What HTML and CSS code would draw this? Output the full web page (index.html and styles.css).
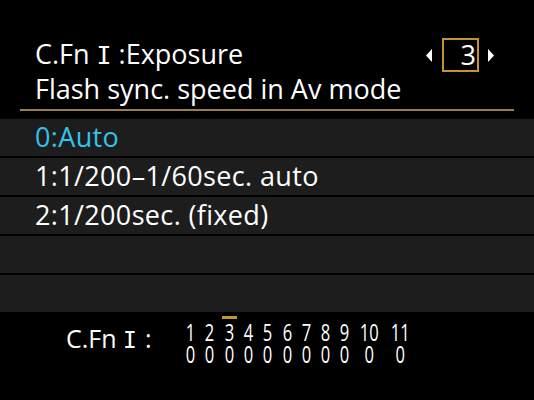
FILE: index.html
```html
<!DOCTYPE html>
<html lang="en">
<head>
<meta charset="utf-8">
<title>C.Fn I: Exposure</title>
<link rel="stylesheet" href="styles.css">
</head>
<body>
<div class="screen">
  <header class="header">
    <div class="title-row">
      <div class="title">C.Fn <span class="rn">I</span> :Exposure</div>
      <div class="selector">
        <svg class="tri" width="6" height="13" viewBox="0 0 6 13"><polygon points="6,0 6,13 0,6.5" fill="#fff"/></svg>
        <div class="numbox">3</div>
        <svg class="tri" width="6" height="13" viewBox="0 0 6 13"><polygon points="0,0 0,13 6,6.5" fill="#fff"/></svg>
      </div>
    </div>
    <div class="subtitle">Flash sync. speed in Av mode</div>
  </header>
  <div class="rule"></div>
  <ul class="options">
    <li class="option selected">0:Auto</li>
    <li class="option">1:1/200–1/60sec. auto</li>
    <li class="option">2:1/200sec. (fixed)</li>
    <li class="option"></li>
    <li class="option"></li>
  </ul>
  <footer class="footer">
    <div class="label">C.Fn <span class="rn">I</span><span class="colon">:</span></div>
    <div class="grid">
      <div class="col"><span class="mark"></span><span class="d">1<br>0</span></div>
      <div class="col"><span class="mark"></span><span class="d">2<br>0</span></div>
      <div class="col"><span class="mark on"></span><span class="d">3<br>0</span></div>
      <div class="col"><span class="mark"></span><span class="d">4<br>0</span></div>
      <div class="col"><span class="mark"></span><span class="d">5<br>0</span></div>
      <div class="col"><span class="mark"></span><span class="d">6<br>0</span></div>
      <div class="col"><span class="mark"></span><span class="d">7<br>0</span></div>
      <div class="col"><span class="mark"></span><span class="d">8<br>0</span></div>
      <div class="col"><span class="mark"></span><span class="d">9<br>0</span></div>
      <div class="col"><span class="mark"></span><span class="d">10<br>0</span></div>
      <div class="col"><span class="mark"></span><span class="d">11<br>0</span></div>
    </div>
  </footer>
</div>
</body>
</html>
```

FILE: styles.css
```css
* { box-sizing: border-box; }
html, body {
  margin: 0;
  padding: 0;
  background: #000;
}
.screen {
  width: 534px;
  height: 400px;
  background: #000;
  color: #fff;
  font-family: "Open Sans", "DejaVu Sans", sans-serif;
  overflow: hidden;
  display: flex;
  flex-direction: column;
}
.rn {
  font-family: "DejaVu Sans Mono", monospace;
  font-size: 0.92em;
}
.header {
  padding: 38px 40px 0 35px;
  font-size: 27px;
  line-height: 34px;
}
.title-row {
  display: flex;
  align-items: center;
  height: 34px;
}
.title { flex: 1; }
.selector {
  display: flex;
  align-items: center;
}
.tri { display: block; }
.numbox {
  width: 37px;
  height: 34px;
  margin: 0 9px 0 10px;
  border: 2px solid #c4952a;
  text-align: right;
  padding-right: 1px;
  line-height: 30px;
  font-size: 27px;
}
.rule {
  height: 2px;
  margin: 3px 20px 0 20px;
  background: #9a8048;
}
.options {
  list-style: none;
  margin: 8px 0 0 0;
  padding: 0;
  display: flex;
  flex-direction: column;
  gap: 2px;
}
.option {
  height: 37px;
  background: #1d1d1d;
  padding-left: 35px;
  font-size: 27px;
  line-height: 35px;
  letter-spacing: 0.35px;
}
.option.selected { color: #33c2ea; }
.footer {
  display: flex;
  align-items: flex-start;
  padding: 4px 0 0 66px;
}
.label {
  font-size: 25px;
  line-height: 30px;
  margin-top: 7px;
  width: 115px;
}
.colon { margin-left: 8px; }
.grid {
  display: grid;
  grid-template-columns: repeat(9, 19.3px) 29px 33px;
}
.col {
  display: flex;
  flex-direction: column;
  align-items: center;
}
.mark {
  width: 15px;
  height: 3px;
  margin-bottom: 2px;
}
.mark.on { background: #c4952a; }
.d {
  display: block;
  text-align: center;
  font-size: 23px;
  line-height: 22px;
  transform: scaleX(0.72);
}
```
